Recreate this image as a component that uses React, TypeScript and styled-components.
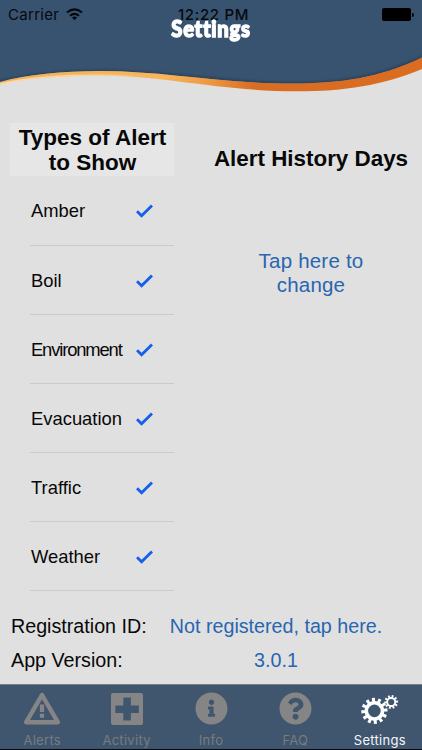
import React, { useState } from 'react';
import styled, { createGlobalStyle } from 'styled-components';
import { FaInfoCircle, FaQuestionCircle } from 'react-icons/fa';

const alertTypes = [
    { name: 'Amber', spacing: 0 },
    { name: 'Boil', spacing: 0 },
    { name: 'Environment', spacing: -1.15 },
    { name: 'Evacuation', spacing: 0 },
    { name: 'Traffic', spacing: 0 },
    { name: 'Weather', spacing: 0 },
];

// builds a cog outline with square teeth and a round hole
const gearPath = (cx: number, cy: number, outer: number, body: number, hole: number, teeth: number) => {
    const step = (Math.PI * 2) / teeth;
    const points: string[] = [];
    const add = (r: number, a: number) =>
        points.push(`${(cx + r * Math.cos(a)).toFixed(2)} ${(cy + r * Math.sin(a)).toFixed(2)}`);
    for (let i = 0; i < teeth; i += 1) {
        const a = i * step - 0.08;
        add(body, a - step * 0.28);
        add(outer, a - step * 0.23);
        add(outer, a + step * 0.23);
        add(body, a + step * 0.28);
    }
    return `M${points.join('L')}Z M${cx + hole} ${cy}a${hole} ${hole} 0 1 0 ${-hole * 2} 0a${hole} ${hole} 0 1 0 ${hole * 2} 0Z`;
};

const WarningIcon = () => (
    <svg width="38" height="33" viewBox="0 0 38 33">
        <path d="M19 3L34.8 30.2H3.2Z" fill="none" stroke="currentColor" strokeWidth="4.4" strokeLinejoin="round" />
        <path d="M16.9 12.5h4.2v7.6h-4.2zM16.9 21.8h4.2v4h-4.2z" fill="currentColor" />
    </svg>
);

const CrossIcon = () => (
    <svg width="32" height="32" viewBox="0 0 32 32">
        <path
            fill="currentColor"
            fillRule="evenodd"
            d="M2 0h28a2 2 0 0 1 2 2v28a2 2 0 0 1-2 2H2a2 2 0 0 1-2-2V2a2 2 0 0 1 2-2zM12.3 4.5v8H4.3v7.6h8v7.4h7.6v-7.4h8v-7.6h-8v-8z"
        />
    </svg>
);

const GearsIcon = () => (
    <svg width="38" height="33" viewBox="0 0 38 33" fill="currentColor" fillRule="evenodd">
        <path d={gearPath(13.4, 18.9, 13.2, 9.9, 6.3, 12)} />
        <path d={gearPath(30.2, 10, 7, 5, 3.1, 10)} />
    </svg>
);

const tabs = [
    { name: 'Alerts', icon: <WarningIcon /> },
    { name: 'Activity', icon: <CrossIcon /> },
    { name: 'Info', icon: <FaInfoCircle size={33} /> },
    { name: 'FAQ', icon: <FaQuestionCircle size={33} /> },
    { name: 'Settings', icon: <GearsIcon /> },
];

function App() {
    const [active, setActive] = useState('Settings');
    const [checked, setChecked] = useState(alertTypes.map((val) => val.name));

    const toggle = (name: string) => {
        setChecked(checked.includes(name) ? checked.filter((val) => val !== name) : [...checked, name]);
    };

    return (
        <>
            <GlobalStyle />
            <Screen>
                <Header>
                    <Wave width="422" height="100" viewBox="0 0 422 100">
                        <defs>
                            <linearGradient id="ribbon">
                                <stop offset="0" stopColor="#efb25c" />
                                <stop offset="0.38" stopColor="#f7b65a" />
                                <stop offset="0.49" stopColor="#ee9b43" />
                                <stop offset="0.6" stopColor="#d96d23" />
                                <stop offset="1" stopColor="#db6c20" />
                            </linearGradient>
                            <linearGradient id="highlight">
                                <stop offset="0" stopColor="#fbdcae" />
                                <stop offset="0.4" stopColor="#fbd096" />
                                <stop offset="0.58" stopColor="#fbd096" stopOpacity="0" />
                            </linearGradient>
                            <filter id="soft" x="-5%" y="-20%" width="110%" height="140%">
                                <feGaussianBlur stdDeviation="1.3" />
                            </filter>
                        </defs>
                        <path
                            d="M0 0H422V57.5C380 78 340 83.5 292 83.5C220 83.5 165 71 100 71C62 71 28 74.5 0 82Z"
                            fill="#38536f"
                        />
                        <path
                            d="M-5 82.5C28 74 62 70.7 100 70.7C165 70.7 220 83 292 83C340 83 380 77.5 427 55"
                            fill="none"
                            stroke="#2a3e54"
                            strokeWidth="2"
                            filter="url(#soft)"
                        />
                        <path
                            d="M0 82C28 74.5 62 71 100 71C165 71 220 83.5 292 83.5C340 83.5 380 78 422 57.5V69C382 85.5 345 91.3 297 91.3C220 91.3 165 75.5 100 75.5C62 75.5 28 78 0 84.5Z"
                            fill="url(#ribbon)"
                        />
                        <path
                            d="M0 84C28 77.5 62 75 100 75C165 75 210 83.5 250 88"
                            fill="none"
                            stroke="url(#highlight)"
                            strokeWidth="1.5"
                        />
                    </Wave>
                    <StatusBar>
                        <Carrier>
                            <span>Carrier</span>
                            <svg width="17" height="13" viewBox="0 0 17 13">
                                <g fill="none" stroke="#05090e" strokeWidth="2">
                                    <path d="M1 4.5Q8.5-1.8 16 4.5" />
                                    <path d="M4 7.8Q8.5 4 13 7.8" />
                                </g>
                                <path d="M5.9 9.5Q8.5 7.4 11.1 9.5L8.5 12.2Z" fill="#05090e" />
                            </svg>
                        </Carrier>
                        <Time>12:22 PM</Time>
                        <Battery />
                    </StatusBar>
                    <Title>Settings</Title>
                </Header>
                <Content>
                    <Types>
                        <TypesTitle>
                            Types of Alert
                            <br />
                            to Show
                        </TypesTitle>
                        <List>
                            {alertTypes.map((val) => (
                                <Row key={val.name} onClick={() => toggle(val.name)}>
                                    <RowName $spacing={val.spacing}>{val.name}</RowName>
                                    {checked.includes(val.name) && (
                                        <svg width="17" height="14" viewBox="0 0 17 14">
                                            <path d="M1 7.3L5.6 11.8L16 1.4" fill="none" stroke="#145fee" strokeWidth="2.8" />
                                        </svg>
                                    )}
                                </Row>
                            ))}
                        </List>
                    </Types>
                    <History>
                        <HistoryTitle>Alert History Days</HistoryTitle>
                        <HistoryButton>
                            Tap here to
                            <br />
                            change
                        </HistoryButton>
                    </History>
                </Content>
                <Details>
                    <DetailRow>
                        <dt>Registration ID:</dt>
                        <dd>Not registered, tap here.</dd>
                    </DetailRow>
                    <DetailRow>
                        <dt>App Version:</dt>
                        <dd>3.0.1</dd>
                    </DetailRow>
                </Details>
                <TabBar>
                    {tabs.map((tab) => (
                        <Tab key={tab.name} $active={active === tab.name} onClick={() => setActive(tab.name)}>
                            <TabIcon>{tab.icon}</TabIcon>
                            <span>{tab.name}</span>
                        </Tab>
                    ))}
                </TabBar>
            </Screen>
        </>
    );
}

const GlobalStyle = createGlobalStyle`
    * {
        box-sizing: border-box;
    }
    body {
        margin: 0;
        background: #e0e0e0;
    }
    button {
        border: 0;
        padding: 0;
        background: none;
        font-family: inherit;
        cursor: pointer;
    }
`;

const Screen = styled.div`
    display: flex;
    flex-direction: column;
    width: 422px;
    height: 750px;
    overflow: hidden;
    background: #e0e0e0;
    color: #080808;
    font-family: 'Liberation Sans', Arial, sans-serif;
`;

const Header = styled.header`
    position: relative;
    isolation: isolate;
    height: 123px;
    border-top: 1px solid #0b0f16;
`;
const Wave = styled.svg`
    position: absolute;
    top: -1px;
    left: 0;
    z-index: -1;
`;
const StatusBar = styled.div`
    display: grid;
    grid-template-columns: 1fr auto 1fr;
    align-items: center;
    height: 27px;
    padding: 0 8px;
    font-family: Inter, sans-serif;
    font-size: 15px;
    color: #05090e;
`;
const Carrier = styled.div`
    display: flex;
    align-items: center;
    gap: 7px;
    letter-spacing: 0.3px;
    & svg {
        margin-top: -1px;
    }
`;
const Time = styled.div`
    font-weight: 500;
    letter-spacing: 0.65px;
    padding-left: 5px;
`;
const Battery = styled.div`
    justify-self: end;
    display: flex;
    align-items: center;
    width: 32px;
    &::before {
        content: '';
        width: 29px;
        height: 13px;
        border-radius: 2px;
        background: #000;
    }
    &::after {
        content: '';
        width: 2px;
        height: 4px;
        margin-left: 1px;
        border-radius: 0 2px 2px 0;
        background: #000;
    }
`;
const Title = styled.h1`
    margin: -14px 0 0;
    text-align: center;
    font-family: Lato, sans-serif;
    font-size: 22.5px;
    line-height: 29px;
    font-weight: 900;
    color: #fff;
    -webkit-text-stroke: 1.4px #fff;
    letter-spacing: 0.8px;
    transform: scaleX(0.9);
`;

const Content = styled.main`
    display: flex;
    height: 468px;
`;
const Types = styled.section`
    width: 164px;
    margin-left: 10px;
`;
const TypesTitle = styled.h2`
    margin: 0;
    height: 53px;
    padding: 2px 0 0 1px;
    background: #e6e6e6;
    text-align: center;
    font-size: 22.5px;
    line-height: 25px;
    white-space: nowrap;
`;
const List = styled.ul`
    list-style: none;
    margin: 0.6px 0 0 20px;
    padding: 0;
`;
const Row = styled.li`
    display: flex;
    align-items: center;
    justify-content: space-between;
    height: 69.1px;
    padding: 1.6px 21px 0 1px;
    border-bottom: 1px solid #cbcbcb;
    cursor: pointer;
`;
const RowName = styled.span<{ $spacing: number }>`
    width: 104px;
    font-size: 18.4px;
    letter-spacing: ${(props) => props.$spacing}px;
    white-space: nowrap;
    margin-right: -2px;
`;

const History = styled.section`
    width: 248px;
    padding: 23px 0 0 26px;
    text-align: center;
`;
const HistoryTitle = styled.h2`
    margin: 0;
    font-size: 22.4px;
    line-height: 26px;
    white-space: nowrap;
`;
const HistoryButton = styled.button`
    margin-top: 77px;
    font-size: 20.5px;
    line-height: 24px;
    letter-spacing: 0.2px;
    color: #2866b1;
`;

const Details = styled.dl`
    margin: 0;
    height: 93px;
    padding: 18px 0 0 11px;
`;
const DetailRow = styled.div`
    display: flex;
    height: 34px;
    font-size: 19.7px;
    line-height: 34px;
    white-space: nowrap;
    & dt {
        width: 158px;
    }
    & dd {
        width: 214px;
        margin: 0;
        text-align: center;
        color: #2866b1;
    }
`;

const TabBar = styled.nav`
    display: flex;
    height: 66px;
    border-top: 1px solid #77818c;
    border-bottom: 1px solid #080c12;
    background: #40566f;
`;
const Tab = styled.button<{ $active: boolean }>`
    display: flex;
    flex: 1;
    flex-direction: column;
    align-items: center;
    color: ${(props) => (props.$active ? '#fff' : '#858586')};
    & span {
        font-family: Inter, sans-serif;
        font-size: 13px;
        line-height: 16px;
        letter-spacing: 0.3px;
        color: ${(props) => (props.$active ? '#f4f6f8' : '#777b80')};
    }
`;
const TabIcon = styled.div`
    display: flex;
    align-items: center;
    justify-content: center;
    height: 47px;
`;

export default App;
